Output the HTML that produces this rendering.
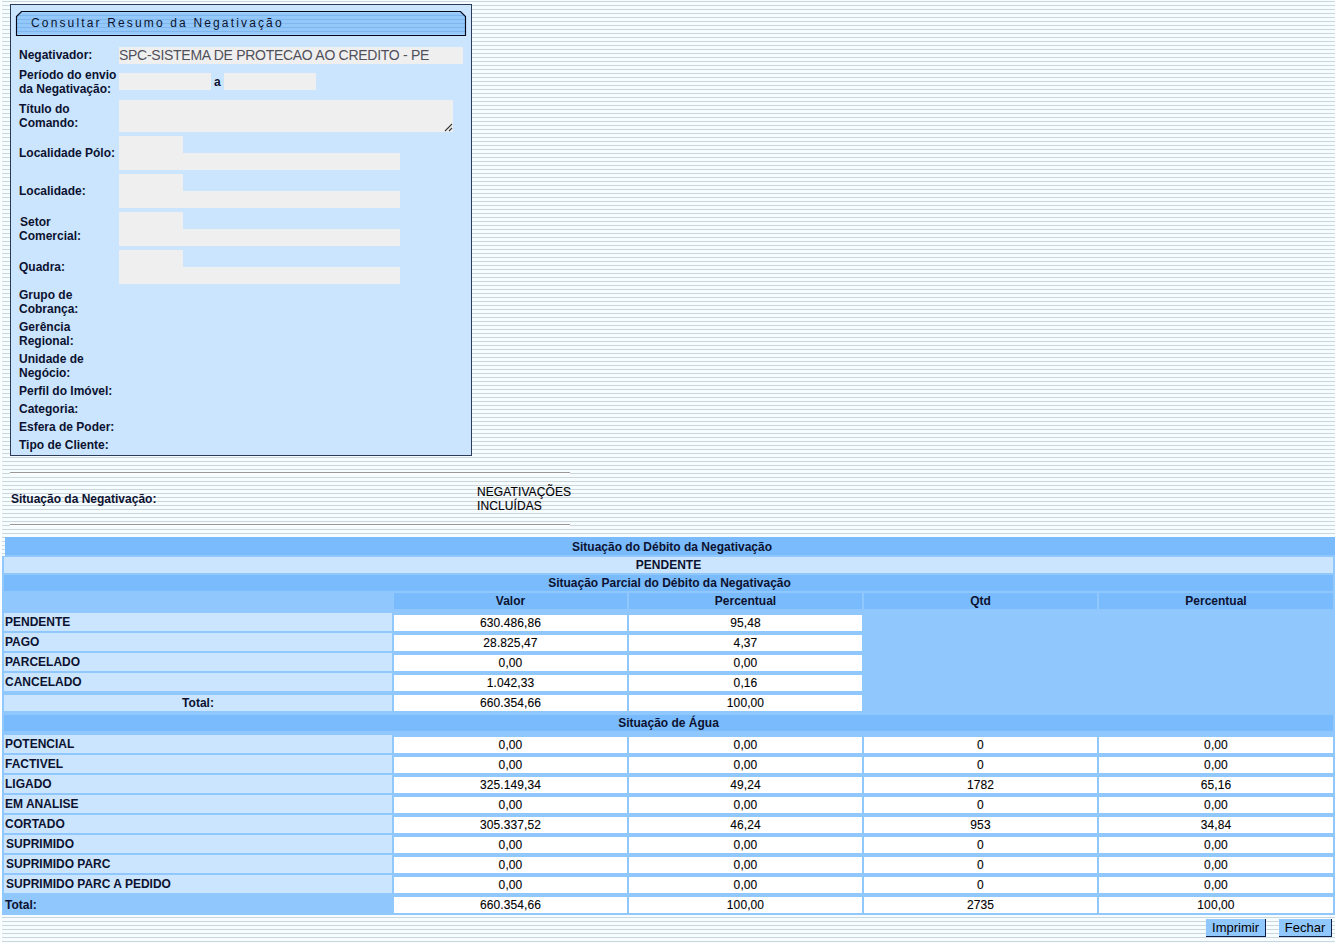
<!DOCTYPE html>
<html><head><meta charset="utf-8"><title>Consultar Resumo da Negativação</title>
<style>
html,body{margin:0;padding:0;}
body{width:1335px;height:943px;position:relative;overflow:hidden;background:#fbfeff;font-family:"Liberation Sans",sans-serif;font-size:12px;color:#000;}
.bg{position:absolute;left:2px;top:0;width:1333px;height:943px;background:repeating-linear-gradient(to bottom,#f7fcfe 0,#f7fcfe 1px,#cad7df 1px,#cad7df 2px,#f7fcfe 2px,#f7fcfe 4px);}
.a{position:absolute;white-space:nowrap;line-height:14px;}
.b{font-weight:bold;color:#0c1230;}
.a:not(.b){-webkit-text-stroke:0.1px currentColor;letter-spacing:0.1px;}
.a.ns{-webkit-text-stroke:0;}
.box{position:absolute;left:10px;top:4px;width:460px;height:450px;border:1px solid #2c3b56;background:#cbe5fe;}
.in{position:absolute;background:#efefef;}
.c{position:absolute;}
.hr{position:absolute;left:10px;width:560px;height:1px;background:#999;border-bottom:1px solid #fff;}
.btn{position:absolute;top:919px;height:17px;background:#90c7fc;border-right:1px solid #0e1e46;border-bottom:1px solid #0e1e46;font-size:13px;line-height:17px;text-align:center;color:#000;}
</style></head><body>
<div class="bg"></div>

<div class="box"></div>
<svg class="c" style="left:0;top:0" width="480" height="40">
 <defs>
  <pattern id="tabp" x="0" y="0" width="4" height="4" patternUnits="userSpaceOnUse">
   <rect width="4" height="4" fill="#94c8fa"/>
   <rect y="3" width="4" height="1" fill="#7fb6ee"/>
  </pattern>
 </defs>
 <polygon points="16.5,16.5 21.5,11.5 460.5,11.5 465.5,16.5 465.5,35.5 16.5,35.5" fill="url(#tabp)"/>
 <rect x="21" y="12" width="440" height="1" fill="#a6d3fd"/>
 <rect x="17" y="34" width="448" height="1" fill="#a6d3fd"/>
 <polygon points="16.5,16.5 21.5,11.5 460.5,11.5 465.5,16.5 465.5,35.5 16.5,35.5" fill="none" stroke="#05091a" stroke-width="1.15"/>
</svg>
<div class="a ns" style="left:31px;top:16px;letter-spacing:2.15px;color:#0a1430;">Consultar Resumo da Negativação</div>

<div class="a b" style="left:19px;top:48px;">Negativador:</div>
<div class="in" style="left:119px;top:47px;width:344px;height:17px;"></div>
<div class="a ns" style="left:119px;top:47px;font-size:14px;letter-spacing:-0.28px;line-height:16px;color:#50505a;">SPC-SISTEMA DE PROTECAO AO CREDITO - PE</div>

<div class="a b" style="left:19px;top:68px;">Período do envio<br>da Negativação:</div>
<div class="in" style="left:119px;top:73px;width:92px;height:17px;"></div>
<div class="a b" style="left:214px;top:75px;">a</div>
<div class="in" style="left:224px;top:73px;width:92px;height:17px;"></div>

<div class="a b" style="left:19px;top:102px;">Título do<br>Comando:</div>
<div class="in" style="left:119px;top:100px;width:334px;height:32px;"></div>
<svg class="c" style="left:444px;top:123px" width="9" height="9"><path d="M1,8 L8,1 M5,8 L8,5" stroke="#3a3a3a" stroke-width="1.1"/></svg>

<div class="a b" style="left:19px;top:146px;">Localidade Pólo:</div>
<div class="in" style="left:119px;top:136px;width:64px;height:17px;"></div>
<div class="in" style="left:119px;top:153px;width:281px;height:17px;"></div>

<div class="a b" style="left:19px;top:184px;">Localidade:</div>
<div class="in" style="left:119px;top:174px;width:64px;height:17px;"></div>
<div class="in" style="left:119px;top:191px;width:281px;height:17px;"></div>

<div class="a b" style="left:20px;top:215px;">Setor</div><div class="a b" style="left:19px;top:229px;">Comercial:</div>
<div class="in" style="left:119px;top:212px;width:64px;height:17px;"></div>
<div class="in" style="left:119px;top:229px;width:281px;height:17px;"></div>

<div class="a b" style="left:19px;top:260px;">Quadra:</div>
<div class="in" style="left:119px;top:250px;width:64px;height:17px;"></div>
<div class="in" style="left:119px;top:267px;width:281px;height:17px;"></div>

<div class="a b" style="left:19px;top:288px;">Grupo de<br>Cobrança:</div>
<div class="a b" style="left:19px;top:320px;">Gerência<br>Regional:</div>
<div class="a b" style="left:19px;top:352px;">Unidade de<br>Negócio:</div>
<div class="a b" style="left:19px;top:384px;">Perfil do Imóvel:</div>
<div class="a b" style="left:19px;top:402px;">Categoria:</div>
<div class="a b" style="left:19px;top:420px;">Esfera de Poder:</div>
<div class="a b" style="left:19px;top:438px;">Tipo de Cliente:</div>

<div class="hr" style="top:472px;"></div>
<div class="a b" style="left:11px;top:492px;">Situação da Negativação:</div>
<div class="a" style="left:477px;top:485px;">NEGATIVAÇÕES<br>INCLUÍDAS</div>
<div class="hr" style="top:524px;"></div>

<!-- TABLE -->
<div class="c" style="left:5px;top:537px;width:1330px;height:20px;background:#90c7fc;"></div>
<div class="c" style="left:5px;top:537px;width:1330px;height:18px;background:#79bbfd;"></div>
<div class="a b" style="left:7px;top:540px;width:1330px;text-align:center">Situação do Débito da Negativação</div>
<div class="c" style="left:2px;top:556px;width:1333px;height:359px;background:#90c7fc;"></div>
<div class="c" style="left:4px;top:557px;width:1329px;height:16px;background:#cbe5fe;"></div>
<div class="a b" style="left:4px;top:558px;width:1329px;text-align:center">PENDENTE</div>
<div class="c" style="left:4px;top:575px;width:1329px;height:16px;background:#79bbfd;"></div>
<div class="a b" style="left:5px;top:576px;width:1329px;text-align:center">Situação Parcial do Débito da Negativação</div>
<div class="c" style="left:394px;top:593px;width:233px;height:16px;background:#79bbfd;"></div>
<div class="a b" style="left:394px;top:594px;width:233px;text-align:center">Valor</div>
<div class="c" style="left:629px;top:593px;width:233px;height:16px;background:#79bbfd;"></div>
<div class="a b" style="left:629px;top:594px;width:233px;text-align:center">Percentual</div>
<div class="c" style="left:864px;top:593px;width:233px;height:16px;background:#79bbfd;"></div>
<div class="a b" style="left:864px;top:594px;width:233px;text-align:center">Qtd</div>
<div class="c" style="left:1099px;top:593px;width:234px;height:16px;background:#79bbfd;"></div>
<div class="a b" style="left:1099px;top:594px;width:234px;text-align:center">Percentual</div>
<div class="c" style="left:4px;top:613px;width:388px;height:18px;background:#cbe5fe;"></div>
<div class="a b" style="left:5px;top:615px;width:387px;text-align:left">PENDENTE</div>
<div class="c" style="left:394px;top:615px;width:233px;height:16px;background:#ffffff;"></div>
<div class="a" style="left:394px;top:616px;width:233px;text-align:center">630.486,86</div>
<div class="c" style="left:629px;top:615px;width:233px;height:16px;background:#ffffff;"></div>
<div class="a" style="left:629px;top:616px;width:233px;text-align:center">95,48</div>
<div class="c" style="left:4px;top:633px;width:388px;height:18px;background:#cbe5fe;"></div>
<div class="a b" style="left:5px;top:635px;width:387px;text-align:left">PAGO</div>
<div class="c" style="left:394px;top:635px;width:233px;height:16px;background:#ffffff;"></div>
<div class="a" style="left:394px;top:636px;width:233px;text-align:center">28.825,47</div>
<div class="c" style="left:629px;top:635px;width:233px;height:16px;background:#ffffff;"></div>
<div class="a" style="left:629px;top:636px;width:233px;text-align:center">4,37</div>
<div class="c" style="left:4px;top:653px;width:388px;height:18px;background:#cbe5fe;"></div>
<div class="a b" style="left:5px;top:655px;width:387px;text-align:left">PARCELADO</div>
<div class="c" style="left:394px;top:655px;width:233px;height:16px;background:#ffffff;"></div>
<div class="a" style="left:394px;top:656px;width:233px;text-align:center">0,00</div>
<div class="c" style="left:629px;top:655px;width:233px;height:16px;background:#ffffff;"></div>
<div class="a" style="left:629px;top:656px;width:233px;text-align:center">0,00</div>
<div class="c" style="left:4px;top:673px;width:388px;height:18px;background:#cbe5fe;"></div>
<div class="a b" style="left:5px;top:675px;width:387px;text-align:left">CANCELADO</div>
<div class="c" style="left:394px;top:675px;width:233px;height:16px;background:#ffffff;"></div>
<div class="a" style="left:394px;top:676px;width:233px;text-align:center">1.042,33</div>
<div class="c" style="left:629px;top:675px;width:233px;height:16px;background:#ffffff;"></div>
<div class="a" style="left:629px;top:676px;width:233px;text-align:center">0,16</div>
<div class="c" style="left:4px;top:695px;width:388px;height:16px;background:#cbe5fe;"></div>
<div class="a b" style="left:4px;top:696px;width:388px;text-align:center">Total:</div>
<div class="c" style="left:394px;top:695px;width:233px;height:16px;background:#ffffff;"></div>
<div class="a" style="left:394px;top:696px;width:233px;text-align:center">660.354,66</div>
<div class="c" style="left:629px;top:695px;width:233px;height:16px;background:#ffffff;"></div>
<div class="a" style="left:629px;top:696px;width:233px;text-align:center">100,00</div>
<div class="c" style="left:4px;top:715px;width:1329px;height:16px;background:#79bbfd;"></div>
<div class="a b" style="left:4px;top:716px;width:1329px;text-align:center">Situação de Água</div>
<div class="c" style="left:4px;top:735px;width:388px;height:18px;background:#cbe5fe;"></div>
<div class="a b" style="left:5px;top:737px;width:387px;text-align:left">POTENCIAL</div>
<div class="c" style="left:394px;top:737px;width:233px;height:16px;background:#ffffff;"></div>
<div class="a" style="left:394px;top:738px;width:233px;text-align:center">0,00</div>
<div class="c" style="left:629px;top:737px;width:233px;height:16px;background:#ffffff;"></div>
<div class="a" style="left:629px;top:738px;width:233px;text-align:center">0,00</div>
<div class="c" style="left:864px;top:737px;width:233px;height:16px;background:#ffffff;"></div>
<div class="a" style="left:864px;top:738px;width:233px;text-align:center">0</div>
<div class="c" style="left:1099px;top:737px;width:234px;height:16px;background:#ffffff;"></div>
<div class="a" style="left:1099px;top:738px;width:234px;text-align:center">0,00</div>
<div class="c" style="left:4px;top:755px;width:388px;height:18px;background:#cbe5fe;"></div>
<div class="a b" style="left:5px;top:757px;width:387px;text-align:left">FACTIVEL</div>
<div class="c" style="left:394px;top:757px;width:233px;height:16px;background:#ffffff;"></div>
<div class="a" style="left:394px;top:758px;width:233px;text-align:center">0,00</div>
<div class="c" style="left:629px;top:757px;width:233px;height:16px;background:#ffffff;"></div>
<div class="a" style="left:629px;top:758px;width:233px;text-align:center">0,00</div>
<div class="c" style="left:864px;top:757px;width:233px;height:16px;background:#ffffff;"></div>
<div class="a" style="left:864px;top:758px;width:233px;text-align:center">0</div>
<div class="c" style="left:1099px;top:757px;width:234px;height:16px;background:#ffffff;"></div>
<div class="a" style="left:1099px;top:758px;width:234px;text-align:center">0,00</div>
<div class="c" style="left:4px;top:775px;width:388px;height:18px;background:#cbe5fe;"></div>
<div class="a b" style="left:5px;top:777px;width:387px;text-align:left">LIGADO</div>
<div class="c" style="left:394px;top:777px;width:233px;height:16px;background:#ffffff;"></div>
<div class="a" style="left:394px;top:778px;width:233px;text-align:center">325.149,34</div>
<div class="c" style="left:629px;top:777px;width:233px;height:16px;background:#ffffff;"></div>
<div class="a" style="left:629px;top:778px;width:233px;text-align:center">49,24</div>
<div class="c" style="left:864px;top:777px;width:233px;height:16px;background:#ffffff;"></div>
<div class="a" style="left:864px;top:778px;width:233px;text-align:center">1782</div>
<div class="c" style="left:1099px;top:777px;width:234px;height:16px;background:#ffffff;"></div>
<div class="a" style="left:1099px;top:778px;width:234px;text-align:center">65,16</div>
<div class="c" style="left:4px;top:795px;width:388px;height:18px;background:#cbe5fe;"></div>
<div class="a b" style="left:5px;top:797px;width:387px;text-align:left">EM ANALISE</div>
<div class="c" style="left:394px;top:797px;width:233px;height:16px;background:#ffffff;"></div>
<div class="a" style="left:394px;top:798px;width:233px;text-align:center">0,00</div>
<div class="c" style="left:629px;top:797px;width:233px;height:16px;background:#ffffff;"></div>
<div class="a" style="left:629px;top:798px;width:233px;text-align:center">0,00</div>
<div class="c" style="left:864px;top:797px;width:233px;height:16px;background:#ffffff;"></div>
<div class="a" style="left:864px;top:798px;width:233px;text-align:center">0</div>
<div class="c" style="left:1099px;top:797px;width:234px;height:16px;background:#ffffff;"></div>
<div class="a" style="left:1099px;top:798px;width:234px;text-align:center">0,00</div>
<div class="c" style="left:4px;top:815px;width:388px;height:18px;background:#cbe5fe;"></div>
<div class="a b" style="left:5px;top:817px;width:387px;text-align:left">CORTADO</div>
<div class="c" style="left:394px;top:817px;width:233px;height:16px;background:#ffffff;"></div>
<div class="a" style="left:394px;top:818px;width:233px;text-align:center">305.337,52</div>
<div class="c" style="left:629px;top:817px;width:233px;height:16px;background:#ffffff;"></div>
<div class="a" style="left:629px;top:818px;width:233px;text-align:center">46,24</div>
<div class="c" style="left:864px;top:817px;width:233px;height:16px;background:#ffffff;"></div>
<div class="a" style="left:864px;top:818px;width:233px;text-align:center">953</div>
<div class="c" style="left:1099px;top:817px;width:234px;height:16px;background:#ffffff;"></div>
<div class="a" style="left:1099px;top:818px;width:234px;text-align:center">34,84</div>
<div class="c" style="left:4px;top:835px;width:388px;height:18px;background:#cbe5fe;"></div>
<div class="a b" style="left:6px;top:837px;width:386px;text-align:left">SUPRIMIDO</div>
<div class="c" style="left:394px;top:837px;width:233px;height:16px;background:#ffffff;"></div>
<div class="a" style="left:394px;top:838px;width:233px;text-align:center">0,00</div>
<div class="c" style="left:629px;top:837px;width:233px;height:16px;background:#ffffff;"></div>
<div class="a" style="left:629px;top:838px;width:233px;text-align:center">0,00</div>
<div class="c" style="left:864px;top:837px;width:233px;height:16px;background:#ffffff;"></div>
<div class="a" style="left:864px;top:838px;width:233px;text-align:center">0</div>
<div class="c" style="left:1099px;top:837px;width:234px;height:16px;background:#ffffff;"></div>
<div class="a" style="left:1099px;top:838px;width:234px;text-align:center">0,00</div>
<div class="c" style="left:4px;top:855px;width:388px;height:18px;background:#cbe5fe;"></div>
<div class="a b" style="left:6px;top:857px;width:386px;text-align:left">SUPRIMIDO PARC</div>
<div class="c" style="left:394px;top:857px;width:233px;height:16px;background:#ffffff;"></div>
<div class="a" style="left:394px;top:858px;width:233px;text-align:center">0,00</div>
<div class="c" style="left:629px;top:857px;width:233px;height:16px;background:#ffffff;"></div>
<div class="a" style="left:629px;top:858px;width:233px;text-align:center">0,00</div>
<div class="c" style="left:864px;top:857px;width:233px;height:16px;background:#ffffff;"></div>
<div class="a" style="left:864px;top:858px;width:233px;text-align:center">0</div>
<div class="c" style="left:1099px;top:857px;width:234px;height:16px;background:#ffffff;"></div>
<div class="a" style="left:1099px;top:858px;width:234px;text-align:center">0,00</div>
<div class="c" style="left:4px;top:875px;width:388px;height:18px;background:#cbe5fe;"></div>
<div class="a b" style="left:6px;top:877px;width:386px;text-align:left">SUPRIMIDO PARC A PEDIDO</div>
<div class="c" style="left:394px;top:877px;width:233px;height:16px;background:#ffffff;"></div>
<div class="a" style="left:394px;top:878px;width:233px;text-align:center">0,00</div>
<div class="c" style="left:629px;top:877px;width:233px;height:16px;background:#ffffff;"></div>
<div class="a" style="left:629px;top:878px;width:233px;text-align:center">0,00</div>
<div class="c" style="left:864px;top:877px;width:233px;height:16px;background:#ffffff;"></div>
<div class="a" style="left:864px;top:878px;width:233px;text-align:center">0</div>
<div class="c" style="left:1099px;top:877px;width:234px;height:16px;background:#ffffff;"></div>
<div class="a" style="left:1099px;top:878px;width:234px;text-align:center">0,00</div>
<div class="a b" style="left:5px;top:898px;width:387px;text-align:left">Total:</div>
<div class="c" style="left:394px;top:897px;width:233px;height:16px;background:#ffffff;"></div>
<div class="a" style="left:394px;top:898px;width:233px;text-align:center">660.354,66</div>
<div class="c" style="left:629px;top:897px;width:233px;height:16px;background:#ffffff;"></div>
<div class="a" style="left:629px;top:898px;width:233px;text-align:center">100,00</div>
<div class="c" style="left:864px;top:897px;width:233px;height:16px;background:#ffffff;"></div>
<div class="a" style="left:864px;top:898px;width:233px;text-align:center">2735</div>
<div class="c" style="left:1099px;top:897px;width:234px;height:16px;background:#ffffff;"></div>
<div class="a" style="left:1099px;top:898px;width:234px;text-align:center">100,00</div>
<div class="btn" style="left:1206px;width:59px;">Imprimir</div>
<div class="btn" style="left:1279px;width:52px;">Fechar</div>
</body></html>
